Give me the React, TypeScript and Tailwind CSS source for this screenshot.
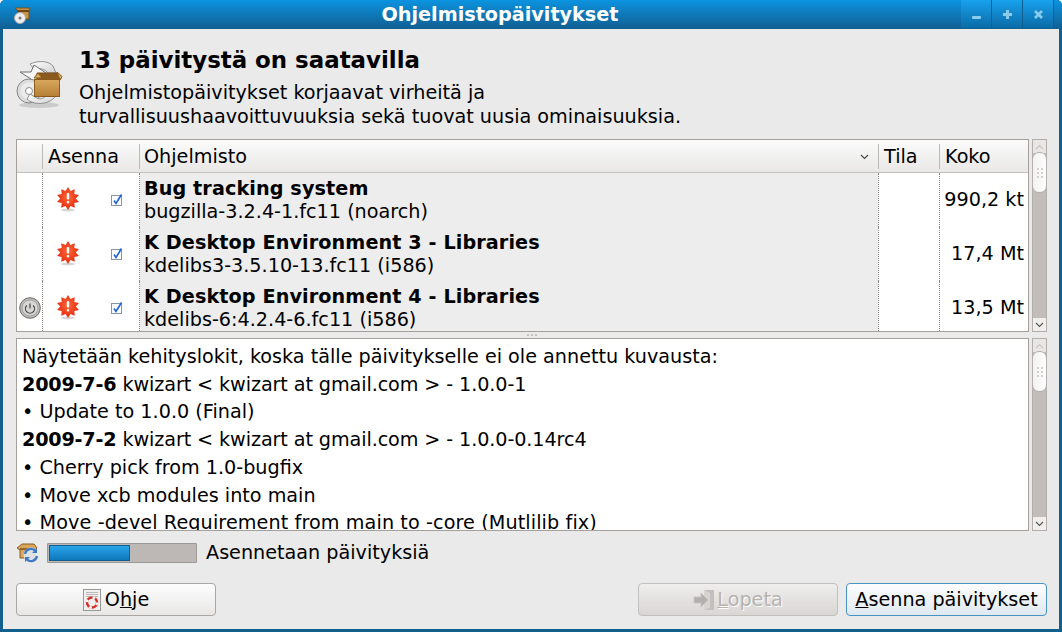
import React from "react";

const starPoints = (() => {
  const pts: string[] = [];
  for (let i = 0; i < 20; i++) {
    const r = i % 2 === 0 ? 11.5 : 7.8;
    const a = (Math.PI * 2 * i) / 20 - Math.PI / 2;
    pts.push(`${(12 + r * Math.cos(a)).toFixed(2)},${(11.5 + r * Math.sin(a)).toFixed(2)}`);
  }
  return pts.join(" ");
})();

const Burst = () => (
  <svg width="24" height="26" viewBox="0 0 24 26">
    <defs>
      <radialGradient id="b" cx="50%" cy="45%" r="55%">
        <stop offset="0" stopColor="#fb6a3a" />
        <stop offset="1" stopColor="#e8280e" />
      </radialGradient>
    </defs>
    <ellipse cx="12" cy="23" rx="7" ry="1.500" fill="#000" opacity=".16" />
    <polygon points={starPoints} fill="url(#b)" />
    <rect x="10.800" y="6" width="2.400" height="6.500" rx="1" fill="#fff" />
    <rect x="10.800" y="14" width="2.400" height="2.400" rx="1" fill="#fff" />
  </svg>
);

const Check = () => (
  <svg width="13" height="13" viewBox="0 0 13 13">
    <rect x=".5" y="2.500" width="10" height="10" fill="#fff" stroke="#8a94a6" />
    <path d="M3 7.500l2 3L10.500 1.500" fill="none" stroke="#2368d8" strokeWidth="1.700" />
  </svg>
);

const Power = () => (
  <svg width="22" height="22" viewBox="0 0 22 22">
    <circle cx="11" cy="11" r="10.300" fill="#bdbbb9" stroke="#6f6d6c" />
    <circle cx="11" cy="11" r="8" fill="#d8d6d4" stroke="#a5a3a1" />
    <path d="M7.800 8.500a4.500 4.500 0 1 0 6.400 0" fill="none" stroke="#444" strokeWidth="1.200" />
    <path d="M11 6.500v5" stroke="#444" strokeWidth="1.200" />
  </svg>
);

const UpdateIcon = () => (
  <svg width="52" height="52" viewBox="0 0 52 52">
    <defs>
      <linearGradient id="box" x1="0" y1="0" x2="0" y2="1">
        <stop offset="0" stopColor="#d9a85c" />
        <stop offset="1" stopColor="#b57f35" />
      </linearGradient>
      <linearGradient id="ring" x1="0" y1="0" x2="1" y2="1">
        <stop offset="0" stopColor="#ffffff" />
        <stop offset="1" stopColor="#d0d0d0" />
      </linearGradient>
    </defs>
    <ellipse cx="25" cy="47" rx="20" ry="3" fill="#000" opacity=".13" />
    {/* top swoosh */}
    <path d="M16 6C25 2 35 3 39 8L42 15H34C31 11 26 10 20 11z" fill="url(#ring)" stroke="#8f8f8f" />
    {/* arrow */}
    <path d="M6 14H17L20 7 32 15 20 25 17 21z" fill="#f6f6f6" stroke="#6f6f6f" />
    {/* disc */}
    <circle cx="15" cy="33" r="12" fill="#dcdcdc" stroke="#858585" />
    <circle cx="15" cy="33" r="8.500" fill="#ececec" />
    <circle cx="15" cy="33" r="3.500" fill="#fff" stroke="#8d8d8d" />
    {/* bottom swoosh */}
    <path d="M13 41C19 47 34 48 42 38H32C29 41 25 42 21 39L16 36z" fill="url(#ring)" stroke="#8f8f8f" />
    {/* box */}
    <path d="M23 15H43L47 20 45 23H23z" fill="#8b5a1e" stroke="#7d4f18" />
    <path d="M20 20L24 15 28 20z" fill="#d9a85c" stroke="#8a5a1c" />
    <path d="M43 14L48 18.500 46 22z" fill="#e0b066" stroke="#8a5a1c" />
    <rect x="20.500" y="21.500" width="25" height="17" fill="url(#box)" stroke="#8a5a1c" />
    <path d="M20.500 25h25" stroke="#d2a15a" />
  </svg>
);

const TitleIcon = () => (
  <svg width="18" height="18" viewBox="0 0 18 18">
    <path d="M1 2h15l-1 4v7H5V6z" fill="#c99447" stroke="#7d4f18" />
    <rect x="3" y="4" width="12" height="2" fill="#6e4514" />
    <circle cx="6" cy="12" r="5.500" fill="#eee" stroke="#aaa" />
    <circle cx="6" cy="12" r="1.500" fill="#777" />
  </svg>
);

const ProgressIcon = () => (
  <svg width="24" height="20" viewBox="0 0 24 20">
    <path d="M1 5L6 1H18L21 5 19 7V15H4V7z" fill="#d8a75c" stroke="#8a5a1c" />
    <path d="M4 6H19" stroke="#7d4f18" strokeWidth="1.500" />
    <circle cx="15" cy="12" r="7.500" fill="#e3ecf7" opacity=".85" />
    <path d="M9 11a6 6 0 0 1 10.500-3M21 13a6 6 0 0 1-10.500 3" fill="none" stroke="#3f79c4" strokeWidth="2.200" />
    <path d="M21 5v5h-5zM9 19v-5h5z" fill="#3f79c4" />
  </svg>
);

const HelpIcon = () => (
  <svg width="18" height="22" viewBox="0 0 18 22">
    <rect x=".5" y=".5" width="17" height="21" fill="#f2f0ee" stroke="#9a9896" />
    <path d="M3 3.500h12M3 5.500h12M3 7.500h12" stroke="#bbb" />
    <circle cx="9" cy="13.500" r="5" fill="none" stroke="#d3312a" strokeWidth="2.400" />
    <circle cx="9" cy="13.500" r="5" fill="none" stroke="#fff" strokeWidth="2.400" strokeDasharray="2.500 5.350" />
  </svg>
);

const QuitIcon = () => (
  <svg width="22" height="22" viewBox="0 0 22 22">
    <path d="M11 1h10v20H11l5-3V4z" fill="#c2bfbc" />
    <path d="M11 1l6 3v15l-6 2z" fill="#d6d3d0" />
    <path d="M1 8h7V4l7 7-7 7v-4H1z" fill="#b2afac" stroke="#c7c4c1" />
  </svg>
);

const Scrollbar = () => (
  <div className="w-[15px] h-full flex flex-col bg-[#c2bdbb] border border-[#b3aeab] relative">
    <div className="h-[13px] bg-[#e9e7e5] flex items-center justify-center shrink-0">
      <svg width="9" height="6" viewBox="0 0 9 6"><path d="M1 5l3.500-3.500L8 5" fill="none" stroke="#c9c6c3" strokeWidth="1.200" /></svg>
    </div>
    <div className="h-[41px] -mt-[1px] -mx-[1px] bg-gradient-to-r from-[#f3f2f1] to-[#fdfdfd] border border-[#b6b1ae] rounded-[7px] flex items-center justify-center shrink-0">
      <div className="grid grid-cols-2 gap-[2px]">
        {[0, 1, 2, 3, 4, 5].map((i) => (
          <div key={i} className="w-[2px] h-[2px] bg-[#d3d0ce]" />
        ))}
      </div>
    </div>
    <div className="flex-1" />
    <div className="h-[13px] bg-[#f1efee] flex items-center justify-center shrink-0">
      <svg width="9" height="6" viewBox="0 0 9 6"><path d="M1 1l3.500 3.500L8 1" fill="none" stroke="#555" strokeWidth="1.100" /></svg>
    </div>
  </div>
);

const rows = [
  { t: "Bug tracking system", s: "bugzilla-3.2.4-1.fc11 (noarch)", k: "990,2 kt", p: false },
  { t: "K Desktop Environment 3 - Libraries", s: "kdelibs3-3.5.10-13.fc11 (i586)", k: "17,4 Mt", p: false },
  { t: "K Desktop Environment 4 - Libraries", s: "kdelibs-6:4.2.4-6.fc11 (i586)", k: "13,5 Mt", p: true },
];

const dotted = "border-l border-dotted border-[#8f8b88]";

const HeadCell = ({ w, children, grow }: { w?: string; children?: React.ReactNode; grow?: boolean }) => (
  <div className={`${w ?? ""} ${grow ? "flex-1 pl-[4px]" : "pl-[5px]"} h-full flex items-center pt-[1px]`}>
    {children}
  </div>
);

const Sep = () => <div className="w-px h-[25px] bg-[#bdb9b6] shrink-0" />;

const Btn = ({ children, cls }: { children: React.ReactNode; cls: string }) => (
  <div className={`h-[33px] flex items-center justify-center rounded-[4px] border ${cls}`}>{children}</div>
);

export default function App() {
  return (
    <div
      className="w-[1062px] h-[632px] overflow-hidden flex flex-col bg-[#115f8c] rounded-t-[5px] text-[19.2px] leading-[22px] text-black"
      style={{ fontFamily: '"DejaVu Sans", sans-serif' }}
    >
      {/* title bar */}
      <div className="h-[29px] shrink-0 relative flex items-center justify-center bg-gradient-to-b from-[#0a93e0] to-[#0f5f92] rounded-t-[5px]">
        <div className="absolute left-[14px] top-[6px]"><TitleIcon /></div>
        <span className="font-bold text-white text-[19.2px] -ml-[62px]">Ohjelmistopäivitykset</span>
        <div className="absolute right-[8px] top-0 h-[28px] flex">
          {["min", "max", "close"].map((n) => (
            <div key={n} className="w-[31px] h-full flex items-center justify-center bg-gradient-to-b from-[#18a2ee] to-[#0b6ba7] border-r border-[#0f5f92]">
              <svg width="11" height="11" viewBox="0 0 11 11">
                {n === "min" && <rect x="1" y="7" width="9" height="3" rx="1" fill="#8accec" />}
                {n === "max" && <path d="M4 1h3v3h3v3H7v3H4V7H1V4h3z" fill="#8accec" />}
                {n === "close" && <path d="M2 2l7 7M9 2l-7 7" stroke="#8accec" strokeWidth="2.600" />}
              </svg>
            </div>
          ))}
        </div>
      </div>

      {/* body */}
      <div className="flex-1 ml-[3px] mr-[3px] mb-[3px] bg-[#eaeaea] flex flex-col pl-[13px] pr-[12px] min-h-0">
        {/* heading */}
        <div className="flex h-[110px] shrink-0">
          <div className="w-[65px] pt-[29px] -ml-[2px] shrink-0"><UpdateIcon /></div>
          <div className="pt-[15px]">
            <div className="font-bold text-[22.9px] leading-[32px]">13 päivitystä on saatavilla</div>
            <div className="leading-[24px] pt-[5px]">
              Ohjelmistopäivitykset korjaavat virheitä ja
              <br />
              turvallisuushaavoittuvuuksia sekä tuovat uusia ominaisuuksia.
            </div>
          </div>
        </div>

        {/* package list */}
        <div className="h-[193px] shrink-0 flex gap-[3px]">
          <div className="w-[1013px] border border-[#a5a09c] bg-white flex flex-col overflow-hidden">
            <div className="h-[33px] shrink-0 flex items-center border-b border-[#c4c0bd] bg-gradient-to-b from-[#fbfbfb] to-[#e9e8e7]">
              <div className="w-[25px] shrink-0" />
              <Sep />
              <HeadCell w="w-[96px] shrink-0">Asenna</HeadCell>
              <Sep />
              <HeadCell grow>
                <span className="flex-1">Ohjelmisto</span>
                <svg className="mr-[9px]" width="9" height="6" viewBox="0 0 9 6"><path d="M1 1l3.500 3.500L8 1" fill="none" stroke="#444" strokeWidth="1.100" /></svg>
              </HeadCell>
              <Sep />
              <HeadCell w="w-[60px] shrink-0">Tila</HeadCell>
              <Sep />
              <HeadCell w="w-[88px] shrink-0">Koko</HeadCell>
            </div>
            <div className="flex-1 overflow-hidden">
              {rows.map((r) => (
                <div key={r.t} className="h-[54px] flex">
                  <div className="w-[25px] shrink-0 flex items-center justify-center">{r.p && <Power />}</div>
                  <div className={`w-[97px] shrink-0 ${dotted} flex items-center`}>
                    <div className="ml-[13px] w-[24px]"><Burst /></div>
                    <div className="ml-[31px] -mt-[2px]"><Check /></div>
                  </div>
                  <div className={`flex-1 ${dotted} bg-[#ededed] pl-[4px] pt-[4px] leading-[23px]`}>
                    <div className="font-bold tracking-[0.1px]">{r.t}</div>
                    <div>{r.s}</div>
                  </div>
                  <div className={`w-[61px] shrink-0 ${dotted}`} />
                  <div className={`w-[89px] shrink-0 ${dotted} flex items-center justify-end pr-[4px]`}>{r.k}</div>
                </div>
              ))}
            </div>
          </div>
          <Scrollbar />
        </div>

        {/* grip */}
        <div className="h-[6px] shrink-0 flex justify-center items-center gap-[2px]">
          {[0, 1, 2].map((i) => <div key={i} className="w-[2px] h-[2px] bg-[#c5c2bf]" />)}
        </div>

        {/* log */}
        <div className="h-[193px] shrink-0 flex gap-[3px]">
          <div className="w-[1013px] border border-[#a5a09c] bg-white overflow-hidden pl-[5px] pt-[4px] leading-[27.7px]">
            <div>Näytetään kehityslokit, koska tälle päivitykselle ei ole annettu kuvausta:</div>
            <div className="tracking-[-0.1px]"><b className="tracking-[-0.2px]">2009-7-6</b> kwizart &lt; kwizart at gmail.com &gt; - 1.0.0-1</div>
            <div>• Update to 1.0.0 (Final)</div>
            <div className="tracking-[-0.1px]"><b className="tracking-[-0.2px]">2009-7-2</b> kwizart &lt; kwizart at gmail.com &gt; - 1.0.0-0.14rc4</div>
            <div>• Cherry pick from 1.0-bugfix</div>
            <div>• Move xcb modules into main</div>
            <div className="tracking-[0.1px]">• Move -devel Requirement from main to -core (Mutlilib fix)</div>
          </div>
          <Scrollbar />
        </div>

        {/* progress */}
        <div className="h-[20px] mt-[12px] shrink-0 flex items-center">
          <div className="w-[31px] shrink-0 -mt-[1px]"><ProgressIcon /></div>
          <div className="w-[150px] h-[20px] shrink-0 bg-[#bdb8b6] border border-[#9c9896] rounded-[1px] p-[1px]">
            <div className="w-[55.5%] h-full bg-gradient-to-b from-[#2aa5ea] to-[#0d78bb] border border-[#0f5f92]" />
          </div>
          <span className="ml-[9px]">Asennetaan päivityksiä</span>
        </div>

        {/* buttons */}
        <div className="mt-[20px] flex shrink-0">
          <Btn cls="w-[200px] gap-[4px] border-[#aaa6a3] bg-gradient-to-b from-[#fdfdfd] to-[#e8e7e6]">
            <HelpIcon />
            <span>O<u>h</u>je</span>
          </Btn>
          <div className="flex-1" />
          <Btn cls="w-[200px] gap-[2px] border-[#c2bfbc] bg-gradient-to-b from-[#efeeed] to-[#d9d6d4] text-[#b5b2af]">
            <QuitIcon />
            <span style={{ textShadow: "1px 1px 0 #fff" }}><u>L</u>opeta</span>
          </Btn>
          <Btn cls="w-[201px] ml-[8px] border-[#4a94c4] bg-gradient-to-b from-[#fdfdfe] to-[#dfe9f1]">
            <span><u>A</u>senna päivitykset</span>
          </Btn>
        </div>
      </div>
    </div>
  );
}
